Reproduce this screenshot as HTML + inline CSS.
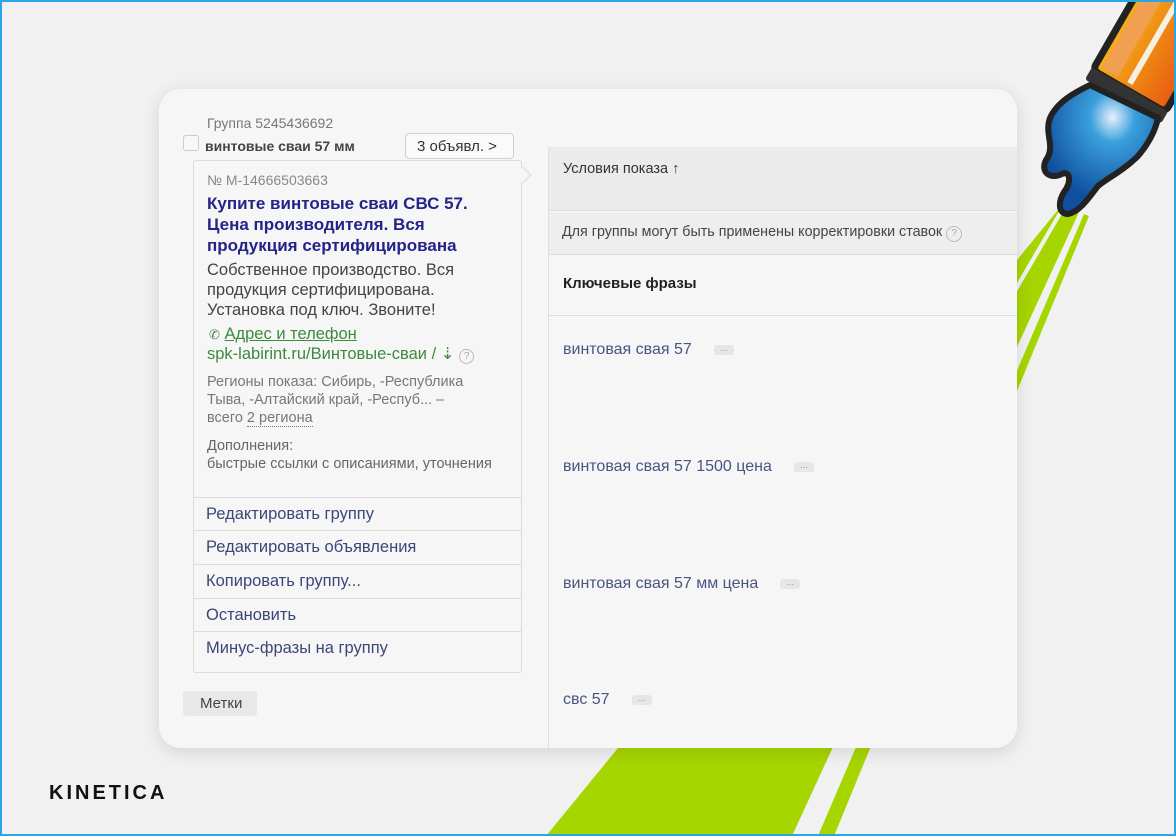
<!DOCTYPE html>
<html><head><meta charset="utf-8"><style>
*{margin:0;padding:0;box-sizing:border-box}
body{width:1176px;height:836px;background:#f1f1f1;position:relative;overflow:hidden;font-family:"Liberation Sans","DejaVu Sans",sans-serif}
.frame{position:absolute;left:0;top:0;width:1176px;height:836px;border:2px solid #2aa6e6;pointer-events:none}
.abs{position:absolute}
.card{position:absolute;left:159px;top:89px;width:858px;height:659px;background:#f6f6f6;border-radius:22px;box-shadow:0 4px 18px rgba(0,0,0,.12);overflow:hidden}
.t{position:absolute;white-space:nowrap}
.menu{position:absolute;left:34px;width:329px;height:34px;border-top:1px solid #dcdcdc;font-size:16.5px;color:#3a4777;padding:7px 0 0 13px}
.kw{position:absolute;left:404px;font-size:16px;color:#4a5480}
.dots{display:inline-block;margin-left:22px;width:20px;height:10px;background:#e6e6e6;border-radius:3px;font-size:9px;color:#999;text-align:center;line-height:6px;vertical-align:middle}
</style></head><body>
<svg class="abs" style="left:0;top:0" width="1176" height="836">
<polygon points="1062,205 1080,210 792,836 546,836" fill="#a6d600"/>
<polygon points="1084,214 1089,216 834,836 818,836" fill="#a6d600"/>
<polygon points="1062,206 1066,207 1012,300 1007,300" fill="#f1f1f1"/>
</svg>
<div class="card">
 <div class="t" style="left:48px;top:26px;font-size:14px;color:#777">Группа 5245436692</div>
 <div class="abs" style="left:24px;top:46px;width:16px;height:16px;border:1px solid #ccc;border-radius:3px;background:#f8f8f8"></div>
 <div class="t" style="left:46px;top:49px;font-size:14px;font-weight:bold;color:#444">винтовые сваи 57 мм</div>
 <div class="abs" style="left:246px;top:44px;width:109px;height:26px;border:1px solid #d0d0d0;border-radius:4px;background:#fafafa;font-size:15px;color:#333;padding:4px 0 0 11px">3 объявл. &gt;</div>
 <div class="abs" style="left:34px;top:71px;width:329px;height:513px;border:1px solid #dcdcdc;border-radius:3px"></div>
 <div class="abs" style="left:358px;top:80px;width:12px;height:12px;border-top:1px solid #dcdcdc;border-right:1px solid #dcdcdc;transform:rotate(45deg);background:#f6f6f6"></div>
 <div class="t" style="left:48px;top:83px;font-size:14px;color:#888">№ M-14666503663</div>
 <div class="t" style="left:48px;top:104px;font-size:17px;font-weight:bold;color:#23238a;line-height:21px">Купите винтовые сваи СВС 57.<br>Цена производителя. Вся<br>продукция сертифицирована</div>
 <div class="t" style="left:48px;top:171px;font-size:16.5px;color:#444;line-height:20px">Собственное производство. Вся<br>продукция сертифицирована.<br>Установка под ключ. Звоните!</div>
 <div class="t" style="left:50px;top:236px;font-size:16.5px;color:#3d8a3d"><span style="font-size:13px">✆</span> <u>Адрес и телефон</u></div>
 <div class="t" style="left:48px;top:255px;font-size:16.5px;color:#3d8a3d">spk-labirint.ru/Винтовые-сваи / ⇣ <span style="display:inline-block;width:15px;height:15px;border:1px solid #bbb;border-radius:50%;font-size:10px;color:#aaa;text-align:center;line-height:13px">?</span></div>
 <div class="t" style="left:48px;top:284px;font-size:14.5px;color:#777;line-height:18px">Регионы показа: Сибирь, -Республика<br>Тыва, -Алтайский край, -Респуб... –<br>всего <span style="border-bottom:1px dotted #777">2 региона</span></div>
 <div class="t" style="left:48px;top:348px;font-size:14.5px;color:#666;line-height:18px">Дополнения:<br>быстрые ссылки с описаниями, уточнения</div>
 <div class="menu" style="top:408px">Редактировать группу</div>
 <div class="menu" style="top:441px">Редактировать объявления</div>
 <div class="menu" style="top:475px">Копировать группу...</div>
 <div class="menu" style="top:509px">Остановить</div>
 <div class="menu" style="top:542px">Минус-фразы на группу</div>
 <div class="abs" style="left:24px;top:602px;width:74px;height:25px;background:#e8e8e8;border-radius:3px;font-size:15px;color:#444;padding:4px 0 0 17px">Метки</div>
 <div class="abs" style="left:389px;top:58px;width:1px;height:601px;background:#e0e0e0"></div>
 <div class="abs" style="left:390px;top:58px;width:468px;height:64px;background:#ebebeb;border-bottom:1px solid #dedede"></div>
 <div class="t" style="left:404px;top:72px;font-size:14.5px;color:#333">Условия показа ↑</div>
 <div class="abs" style="left:390px;top:123px;width:468px;height:43px;background:#eeeeee;border-bottom:1px solid #dedede"></div>
 <div class="t" style="left:403px;top:135px;font-size:14.3px;color:#444">Для группы могут быть применены корректировки ставок <span style="display:inline-block;width:16px;height:16px;border:1px solid #bbb;border-radius:50%;font-size:10px;color:#aaa;text-align:center;line-height:14px">?</span></div>
 <div class="t" style="left:404px;top:186px;font-size:15px;font-weight:bold;color:#222">Ключевые фразы</div>
 <div class="abs" style="left:390px;top:226px;width:468px;height:1px;background:#dedede"></div>
 <div class="kw" style="top:252px">винтовая свая 57<span class="dots">...</span></div>
 <div class="kw" style="top:369px">винтовая свая 57 1500 цена<span class="dots">...</span></div>
 <div class="kw" style="top:486px">винтовая свая 57 мм цена<span class="dots">...</span></div>
 <div class="kw" style="top:602px">свс 57<span class="dots">...</span></div>
</div>
<svg class="abs" style="left:0;top:0" width="1176" height="836">
 <defs><linearGradient id="o" x1="0" x2="1"><stop offset="0" stop-color="#f6b21a"/><stop offset="1" stop-color="#e85a10"/></linearGradient>
 <radialGradient id="b" cx=".6" cy=".25" r=".65"><stop offset="0" stop-color="#e8f0ff"/><stop offset=".3" stop-color="#3aa0dc"/><stop offset="1" stop-color="#1050a0"/></radialGradient></defs>
 <g transform="translate(1125,98) rotate(30)">
  <rect x="-42" y="-220" width="84" height="212" rx="6" fill="url(#o)" stroke="#222" stroke-width="7"/>
  <rect x="-35" y="-215" width="18" height="200" fill="#f0a050"/>
  <rect x="-6" y="-215" width="6" height="200" fill="#f6f0e0"/>
  <rect x="-44" y="-10" width="88" height="14" rx="3" fill="#333"/>
 </g>
 <path d="M1090,85 C1080,90 1058,100 1050,118 C1044,134 1056,146 1046,160 C1040,172 1050,180 1062,174 C1070,170 1072,182 1064,192 C1058,202 1058,214 1068,214 C1080,212 1090,196 1098,186 C1108,178 1124,170 1138,156 C1150,142 1156,128 1158,118 Z" fill="url(#b)" stroke="#222" stroke-width="6" stroke-linejoin="round"/>
</svg>
<div class="t" style="left:49px;top:782px;font-size:20px;font-weight:bold;letter-spacing:3px;color:#111">KINETICA</div>
<div class="frame"></div>
</body></html>
